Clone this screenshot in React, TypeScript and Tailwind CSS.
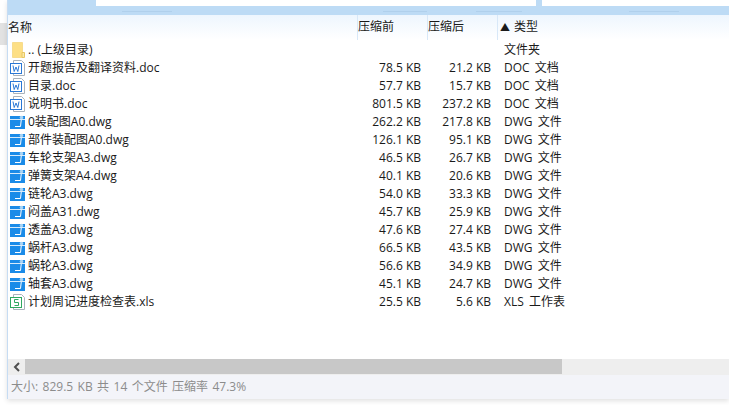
import React from 'react';

type Kind = 'folder' | 'doc' | 'dwg' | 'xls';

const rows: { kind: Kind; name: string; size: string; packed: string; type: string }[] = [
  { kind: 'folder', name: '.. (上级目录)', size: '', packed: '', type: '文件夹' },
  { kind: 'doc', name: '开题报告及翻译资料.doc', size: '78.5 KB', packed: '21.2 KB', type: 'DOC 文档' },
  { kind: 'doc', name: '目录.doc', size: '57.7 KB', packed: '15.7 KB', type: 'DOC 文档' },
  { kind: 'doc', name: '说明书.doc', size: '801.5 KB', packed: '237.2 KB', type: 'DOC 文档' },
  { kind: 'dwg', name: '0装配图A0.dwg', size: '262.2 KB', packed: '217.8 KB', type: 'DWG 文件' },
  { kind: 'dwg', name: '部件装配图A0.dwg', size: '126.1 KB', packed: '95.1 KB', type: 'DWG 文件' },
  { kind: 'dwg', name: '车轮支架A3.dwg', size: '46.5 KB', packed: '26.7 KB', type: 'DWG 文件' },
  { kind: 'dwg', name: '弹簧支架A4.dwg', size: '40.1 KB', packed: '20.6 KB', type: 'DWG 文件' },
  { kind: 'dwg', name: '链轮A3.dwg', size: '54.0 KB', packed: '33.3 KB', type: 'DWG 文件' },
  { kind: 'dwg', name: '闷盖A31.dwg', size: '45.7 KB', packed: '25.9 KB', type: 'DWG 文件' },
  { kind: 'dwg', name: '透盖A3.dwg', size: '47.6 KB', packed: '27.4 KB', type: 'DWG 文件' },
  { kind: 'dwg', name: '蜗杆A3.dwg', size: '66.5 KB', packed: '43.5 KB', type: 'DWG 文件' },
  { kind: 'dwg', name: '蜗轮A3.dwg', size: '56.6 KB', packed: '34.9 KB', type: 'DWG 文件' },
  { kind: 'dwg', name: '轴套A3.dwg', size: '45.1 KB', packed: '24.7 KB', type: 'DWG 文件' },
  { kind: 'xls', name: '计划周记进度检查表.xls', size: '25.5 KB', packed: '5.6 KB', type: 'XLS 工作表' },
];

const FileIcon = ({ kind }: { kind: Kind }) => {
  if (kind === 'folder') {
    return (
      <svg width="16" height="16" viewBox="0 0 16 16">
        <path d="M3.5 0.5h10v15h-10z" fill="#fddf85" stroke="#f7dc8e" />
        <path d="M13 10.5h2.5v5H13z" fill="#fbe9a8" stroke="#e8c763" />
      </svg>
    );
  }
  if (kind === 'dwg') {
    return (
      <svg width="16" height="16" viewBox="0 0 16 16">
        <path d="M1 2h15v13H1z" fill="#1a8be8" />
        <path d="M1 5.5h15" stroke="#d5eafb" />
        <path d="M6 12.5h5.5l.8-7" stroke="#fff" fill="none" />
        <circle cx="12.5" cy="3.5" r="1.8" fill="#a9d4f5" />
      </svg>
    );
  }
  const color = kind === 'doc' ? '#2a78d6' : '#2fa860';
  return (
    <svg width="16" height="16" viewBox="0 0 16 16">
      <path d="M4.5 0.5h8l3 3v12h-11z" fill="#fff" stroke="#aab2bb" />
      <rect x="1.5" y="3.5" width="11" height="10" fill="#fff" stroke={color} />
      {kind === 'doc' ? (
        <path d="M4 5.5l1.2 6 1.8-4.5 1.8 4.5 1.2-6" fill="none" stroke={color} />
      ) : (
        <path d="M9.5 5.5h-4v3h4v3h-4" fill="none" stroke={color} />
      )}
    </svg>
  );
};

export default function App() {
  return (
    <div
      className="relative h-[405px] w-[729px] overflow-hidden bg-white text-[12px] text-[#1a1a1a]"
      style={{ fontFamily: '"Open Sans", "Noto Sans CJK SC", sans-serif' }}
    >
      <div className="flex h-[399px]">
        {/* page edge on the left of the window */}
        <div className="flex w-[7px] flex-col">
          <div className="h-[23px]" />
          <div className="h-[22px] bg-[#e2e2e2]" />
        </div>

        <div className="flex min-w-0 flex-1 flex-col border-l border-[#c6dcf3] shadow-[0_2px_5px_rgba(0,0,0,0.12)]">
          {/* toolbar strip with the address boxes */}
          <div className="flex h-[15px] shrink-0 flex-col bg-[#bddbf5]">
            <div className="flex h-[6px]">
              <div className="ml-[88px] w-[440px] bg-white" />
              <div className="ml-[6px] flex-1 bg-white" />
            </div>
            <div className="mt-[5px] flex">
              <div className="ml-[114px] h-px w-[50px] bg-[#b0d0ec]" />
              <div className="ml-[211px] h-px w-[44px] bg-[#b0d0ec]" />
              <div className="ml-[49px] h-px w-[46px] bg-[#b0d0ec]" />
              <div className="ml-[107px] h-px w-[50px] bg-[#b0d0ec]" />
            </div>
          </div>

          {/* column headers */}
          <div className="flex h-[25px] shrink-0 items-center bg-gradient-to-b from-[#eef6fe] to-white leading-none">
            <div className="w-[349px]">名称</div>
            <div className="h-full w-[70px] border-l border-[#d8e8f8] pt-[6px]">压缩前</div>
            <div className="h-full w-[70px] border-l border-[#d8e8f8] pt-[6px]">压缩后</div>
            <div className="flex h-full items-center gap-[4px] border-l border-[#d8e8f8] pl-[2px] pb-[1px]">
              <span className="text-[10px]">▲</span>
              <span>类型</span>
            </div>
          </div>

          {/* file rows */}
          <div className="flex-1 pt-px">
            {rows.map((row) => (
              <div key={row.name} className="flex h-[18px] items-center leading-none">
                <div className="flex w-[20px] pl-[1px]">
                  <FileIcon kind={row.kind} />
                </div>
                <div className="w-[330px] whitespace-nowrap">{row.name}</div>
                <div className="w-[63px] text-right">{row.size}</div>
                <div className="w-[70px] text-right">{row.packed}</div>
                <div className="ml-[13px] whitespace-nowrap [word-spacing:2px]">{row.type}</div>
              </div>
            ))}
          </div>

          {/* horizontal scrollbar */}
          <div className="flex h-[16px] shrink-0 bg-[#eeeeee]">
            <div className="flex w-[17px] items-center justify-center">
              <svg width="8" height="10" viewBox="0 0 8 10">
                <path d="M6 1L2 5l4 4" fill="none" stroke="#505050" strokeWidth="2" />
              </svg>
            </div>
            <div className="mb-px w-[537px] bg-[#c8c8c8]" />
          </div>

          {/* status bar */}
          <div className="flex h-[24px] shrink-0 items-center bg-[#f3f4f9] pl-[3px] leading-none text-[#8c8c8c] [word-spacing:1.3px]">
            大小: 829.5 KB 共 14 个文件 压缩率 47.3%
          </div>
        </div>
      </div>
    </div>
  );
}
